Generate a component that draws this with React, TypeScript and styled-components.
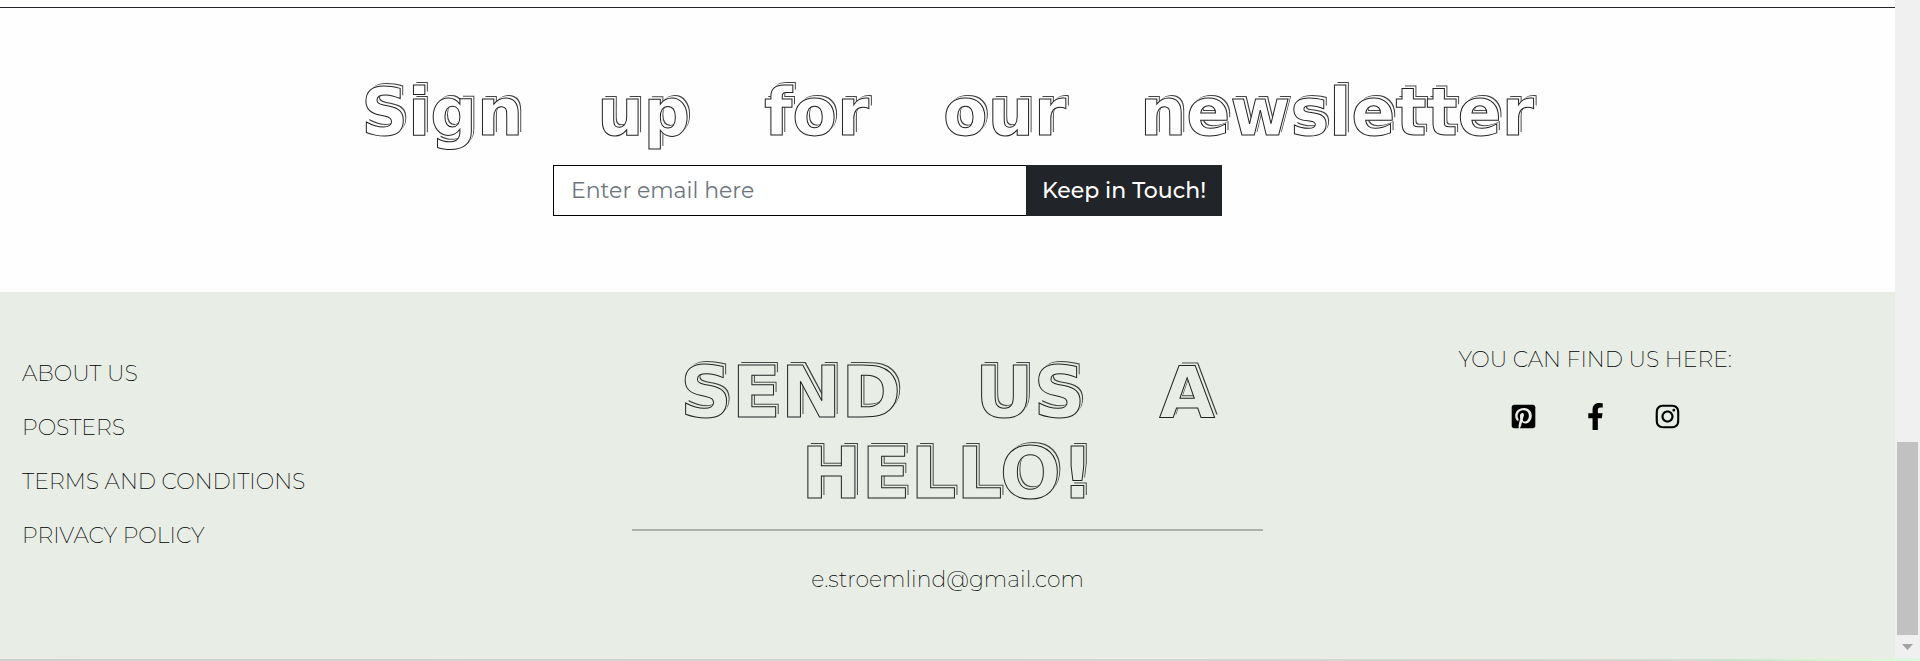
import React from "react";
import styled, { createGlobalStyle } from "styled-components";
import { FaPinterestSquare, FaFacebookF, FaInstagram } from "react-icons/fa";

const GlobalStyle = createGlobalStyle`
  *, *::before, *::after { box-sizing: border-box; }
  body {
    margin: 0;
    background: #fefefe;
    color: #000;
    font-family: Montserrat, Inter, sans-serif;
    font-size: 22px;
    line-height: 32px;
  }
`;

const Window = styled.div`
  display: grid;
  grid-template-columns: 1fr 25px;
  grid-template-rows: 1fr 2px;
  min-height: 100vh;
`;

const Page = styled.div`
  display: flex;
  flex-direction: column;
  min-width: 0;
`;

const TopRule = styled.hr`
  width: 100%;
  height: 1px;
  margin: 7px 0 0;
  border: 0;
  background: #212529;
`;

const Newsletter = styled.section`
  display: flex;
  flex-direction: column;
  align-items: center;
  padding: 65px 0 76px;
`;

const DisplayHeading = styled.h2<{ $size: number; $line: number; $paper: string; $gap: number }>`
  display: flex;
  flex-wrap: wrap;
  justify-content: center;
  column-gap: ${(p) => p.$gap}px;
  margin: 0;
  font-family: "DejaVu Sans", sans-serif;
  font-size: ${(p) => p.$size}px;
  line-height: ${(p) => p.$line}px;
  font-weight: 700;
  color: ${(p) => p.$paper};
  -webkit-text-stroke: 1px #222;
  text-shadow:
    2px -2px 0 ${(p) => p.$paper},
    3px -3px 0 #444;
`;

const SignupForm = styled.form`
  display: flex;
  width: 669px;
  max-width: 100%;
  height: 51px;
  margin: 12px 120px 0 0;
`;

const EmailInput = styled.input`
  flex: 1;
  min-width: 0;
  padding: 0 17px;
  border: 1px solid #000;
  border-right: 0;
  border-radius: 0;
  background: #fff;
  font: inherit;
  color: #212529;
  &::placeholder { color: #6c757d; opacity: 1; }
`;

const SubmitButton = styled.button`
  width: 196px;
  padding: 0;
  border: 0;
  background: #212529;
  color: #fff;
  font: inherit;
  font-weight: 500;
  white-space: nowrap;
`;

const Footer = styled.footer`
  flex: 1;
  display: grid;
  grid-template-columns: repeat(3, 1fr);
  background: #e8eee6;
  font-weight: 200;
  a { color: inherit; text-decoration: none; }
`;

const FooterLinks = styled.ul`
  display: flex;
  flex-direction: column;
  gap: 22px;
  margin: 0;
  padding: 66px 22px 0;
  list-style: none;
`;

const Contact = styled.div`
  display: flex;
  flex-direction: column;
  align-items: center;
  padding: 60px 0;
`;

const ContactRule = styled.hr`
  width: 100%;
  height: 2px;
  margin: 15px 0 33px;
  border: 0;
  background: #adb3ac;
`;

const Social = styled.div`
  display: flex;
  flex-direction: column;
  align-items: center;
  gap: 27px;
  padding: 52px 0 0 32px;
`;

const SocialLinks = styled.nav`
  display: flex;
  a {
    display: flex;
    justify-content: center;
    width: 72px;
    font-size: 27px;
  }
`;

const ScrollTrack = styled.div`
  display: flex;
  flex-direction: column;
  align-items: center;
  justify-content: flex-end;
  gap: 9px;
  padding: 0 1px 9px 1px;
  background: #f0f0f0;
`;

const ScrollThumb = styled.div`
  width: 21px;
  height: 193px;
  background: #c1c1c1;
`;

const BottomEdge = styled.div`
  grid-column: 1 / -1;
  background: linear-gradient(90deg, #cfcfcd 0, #d6d8d4 86%, #cbe6cb 91%, #d6f8d6 96%, #d8fbd8 100%);
`;

type DisplayTextProps = { text: string; size: number; line: number; paper: string; gap: number };

function DisplayText({ text, size, line, paper, gap }: DisplayTextProps) {
  return (
    <DisplayHeading $size={size} $line={line} $paper={paper} $gap={gap}>
      {text.split(" ").map((word, i) => (
        <React.Fragment key={word}>
          {i > 0 && " "}
          <span>{word}</span>
        </React.Fragment>
      ))}
    </DisplayHeading>
  );
}

const links = ["ABOUT US", "POSTERS", "TERMS AND CONDITIONS", "PRIVACY POLICY"];

export default function App() {
  return (
    <>
      <GlobalStyle />
      <Window>
        <Page>
          <TopRule />
          <Newsletter>
            <DisplayText text="Sign up for our newsletter" size={65} line={80} paper="#fefefe" gap={74} />
            <SignupForm onSubmit={(e) => e.preventDefault()}>
              <EmailInput type="email" aria-label="Email address" placeholder="Enter email here" />
              <SubmitButton type="submit">Keep in Touch!</SubmitButton>
            </SignupForm>
          </Newsletter>
          <Footer>
            <FooterLinks>
              {links.map((label) => (
                <li key={label}><a href="#">{label}</a></li>
              ))}
            </FooterLinks>
            <Contact>
              <DisplayText text="SEND US A HELLO!" size={72} line={81} paper="#e8eee6" gap={74} />
              <ContactRule />
              <a href="mailto:e.stroemlind@gmail.com">e.stroemlind@gmail.com</a>
            </Contact>
            <Social>
              <span>YOU CAN FIND US HERE:</span>
              <SocialLinks>
                <a href="#" aria-label="Pinterest"><FaPinterestSquare /></a>
                <a href="#" aria-label="Facebook"><FaFacebookF /></a>
                <a href="#" aria-label="Instagram"><FaInstagram /></a>
              </SocialLinks>
            </Social>
          </Footer>
        </Page>
        <ScrollTrack>
          <ScrollThumb />
          <svg width="11" height="6" viewBox="0 0 11 6" aria-hidden="true">
            <path d="M0 0H11L5.5 6Z" fill="#a3a3a3" />
          </svg>
        </ScrollTrack>
        <BottomEdge />
      </Window>
    </>
  );
}
